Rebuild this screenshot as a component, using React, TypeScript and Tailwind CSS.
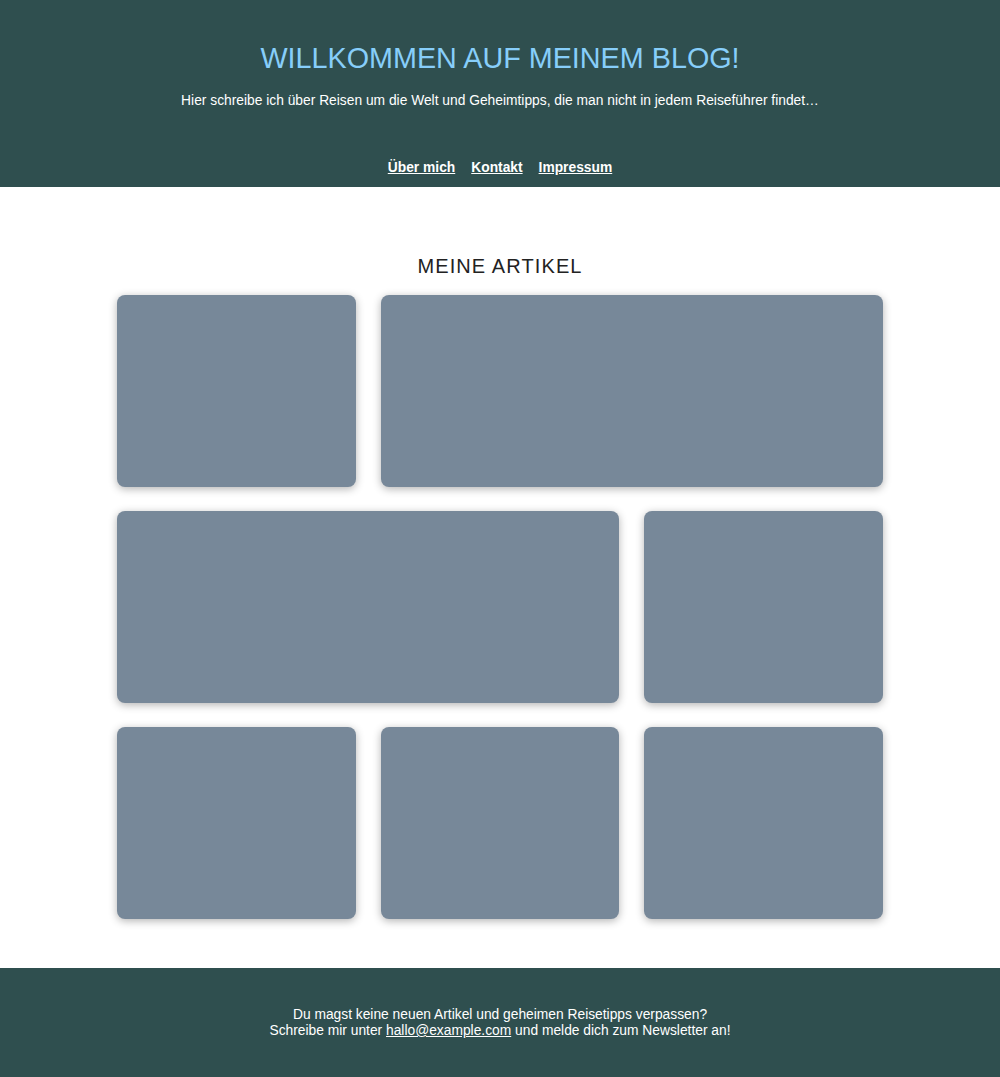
export default function App() {
  const cards = [
    'col-span-1',
    'col-span-2',
    'col-span-2',
    'col-span-1',
    'col-span-1',
    'col-span-1',
    'col-span-1',
  ];

  return (
    <div className="min-h-screen bg-white font-['Liberation_Sans',Arial,sans-serif] text-[#222]">
      {/* Header */}
      <header className="bg-[#2f4f4f] text-white text-center pt-[40px] pb-[10px]">
        <h1 className="text-[28.75px] leading-[36px] text-[#87cefa]">WILLKOMMEN AUF MEINEM BLOG!</h1>
        <p className="text-[13.8px] leading-[18px] mt-[16px]">
          Hier schreibe ich über Reisen um die Welt und Geheimtipps, die man nicht in jedem Reiseführer findet…
        </p>
        <nav className="mt-[49px] flex justify-center gap-[16px] text-[13.8px] leading-[18px] font-bold">
          <a href="#" className="underline">Über mich</a>
          <a href="#" className="underline">Kontakt</a>
          <a href="#" className="underline">Impressum</a>
        </nav>
      </header>

      {/* Articles */}
      <main className="pt-[67px] pb-[49px]">
        <h2 className="text-center text-[20px] leading-[24px] tracking-[1.1px] text-[#222]">MEINE ARTIKEL</h2>
        <div className="mx-auto mt-[17px] w-[766px] grid grid-cols-3 gap-x-[25px] gap-y-[24px]">
          {cards.map((span, i) => (
            <div
              key={i}
              className={`${span} h-[192px] rounded-[8px] bg-[#778899] shadow-[0_2px_8px_rgba(0,0,0,0.3)]`}
            />
          ))}
        </div>
      </main>

      {/* Footer */}
      <footer className="bg-[#2f4f4f] text-white text-center text-[13.8px] leading-[16px] pt-[39px] pb-[38px]">
        <p>Du magst keine neuen Artikel und geheimen Reisetipps verpassen?</p>
        <p>
          Schreibe mir unter <a href="#" className="underline">hallo@example.com</a> und melde dich zum Newsletter an!
        </p>
      </footer>
    </div>
  );
}
